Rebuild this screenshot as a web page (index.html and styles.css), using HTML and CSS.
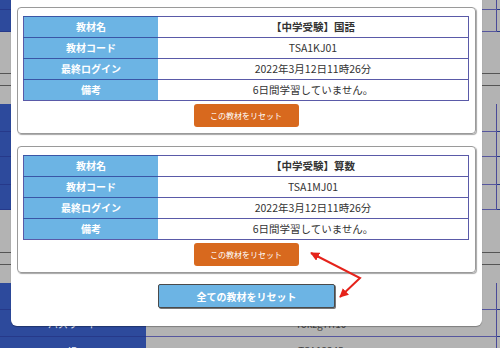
FILE: index.html
```html
<!DOCTYPE html>
<html lang="ja">
<head>
  <meta charset="UTF-8" />
  <title>教材リセット</title>
  <link rel="stylesheet" href="styles.css">
</head>
<body>
  <!-- 背景のページ（モーダルの下） -->
  <div class="page">
    <div class="row blue thin"><div class="head"></div><div class="cell"></div></div>
    <div class="row blue r22"><div class="head"></div><div class="cell"></div></div>
    <div class="band b42 dark-line"></div>
    <div class="band b12 dark-line"></div>
    <div class="band b18"></div>
    <div class="row blue r28"><div class="head"></div><div class="cell"></div></div>
    <div class="row blue r25"><div class="head"></div><div class="cell"></div></div>
    <div class="row blue r28"><div class="head"></div><div class="cell"></div></div>
    <div class="row blue r25"><div class="head"></div><div class="cell"></div></div>
    <div class="band b43 dark-line"></div>
    <div class="band b12 dark-line"></div>
    <div class="band b18"></div>
    <div class="row blue r27"><div class="head"></div><div class="cell"></div></div>
    <div class="row blue r27"><div class="head">パスワード</div><div class="cell">Tokzg7rf10</div></div>
    <div class="row blue r27"><div class="head">ID</div><div class="cell">TSA12345</div></div>
  </div>

  <div class="modal">
    <div class="card">
      <table class="info">
        <tr><th>教材名</th><td class="bold">【中学受験】国語</td></tr>
        <tr><th>教材コード</th><td>TSA1KJ01</td></tr>
        <tr><th>最終ログイン</th><td>2022年3月12日11時26分</td></tr>
        <tr><th>備考</th><td>6日間学習していません。</td></tr>
      </table>
      <button class="reset-one">この教材をリセット</button>
    </div>

    <div class="card">
      <table class="info">
        <tr><th>教材名</th><td class="bold">【中学受験】算数</td></tr>
        <tr><th>教材コード</th><td>TSA1MJ01</td></tr>
        <tr><th>最終ログイン</th><td>2022年3月12日11時26分</td></tr>
        <tr><th>備考</th><td>6日間学習していません。</td></tr>
      </table>
      <button class="reset-one">この教材をリセット</button>
    </div>

    <button class="reset-all">全ての教材をリセット</button>
  </div>

  <!-- 赤い矢印 -->
  <svg class="arrows" width="500" height="348" viewBox="0 0 500 348">
    <defs>
      <marker id="head" viewBox="0 0 10 10" refX="9" refY="5" markerWidth="4.5" markerHeight="4.5" orient="auto-start-reverse">
        <path d="M0 0 L10 5 L0 10 Z" fill="#e5231b" />
      </marker>
    </defs>
    <polyline points="311,253 360,278 340,297" fill="none" stroke="#e5231b" stroke-width="2"
      marker-start="url(#head)" marker-end="url(#head)" />
  </svg>
</body>
</html>
```

FILE: styles.css
```css
body {
  margin: 0;
  width: 500px;
  height: 348px;
  overflow: hidden;
  position: relative;
  font-family: "Noto Sans CJK JP", "Noto Sans", sans-serif;
  background: #b3b3b3;
}

/* 背景 */
.page {
  display: flex;
  flex-direction: column;
}

.row {
  display: flex;
  box-sizing: border-box;
  border-bottom: 1px solid #26398a;
}

.row .head {
  width: 146px;
  background: #2d4a9c;
  color: #e8ecf6;
  font-size: 10px;
  display: flex;
  align-items: center;
  justify-content: center;
}

.row .cell {
  flex: 1;
  background: #b3b3b3;
  color: #444;
  font-size: 10px;
  display: flex;
  align-items: center;
  justify-content: center;
  border-right: 1px solid #4a4a98;
  margin-right: 3px;
  box-shadow: 0 1px 0 #56569e;
}

.thin { height: 10px; }
.r22 { height: 22px; }
.r25 { height: 25px; }
.r27 { height: 27px; }
.r28 { height: 28px; }

.band {
  box-sizing: border-box;
  background: #b3b3b3;
}

.dark-line { border-bottom: 1px solid #555; }
.b12 { height: 12px; }
.b18 { height: 18px; }
.b42 { height: 42px; }
.b43 { height: 43px; }

/* モーダル */
.modal {
  position: absolute;
  left: 11px;
  top: -10px;
  width: 471px;
  box-sizing: border-box;
  padding: 17px 6px 18px;
  background: #fff;
  border-radius: 0 0 6px 6px;
  box-shadow: 0 1px 1px rgba(0, 0, 0, 0.3);
  display: flex;
  flex-direction: column;
  align-items: center;
}

.card {
  width: 459px;
  box-sizing: border-box;
  padding: 8px 6px 6px 5px;
  border: 1px solid #9a9a9a;
  border-radius: 4px;
  box-shadow: 1px 1px 1px rgba(0, 0, 0, 0.35);
  margin-bottom: 12px;
  display: flex;
  flex-direction: column;
  align-items: center;
}

.card + .card {
  margin-bottom: 11px;
}

.info {
  width: 446px;
  border-collapse: collapse;
  border: 1px solid #5a5aa8;
  font-size: 10.5px;
}

.info th,
.info td {
  height: 20px;
  padding: 0;
  text-align: center;
  border-top: 1px solid #5a5aa8;
  line-height: 18px;
}

.info th {
  width: 134px;
  background: #6cb4e4;
  color: #fff;
  font-size: 10px;
  font-weight: bold;
  border-top-color: #3a56a6;
}

.info td {
  color: #333;
}

.info td.bold {
  font-weight: bold;
}

.reset-one {
  margin-top: 3px;
  width: 105px;
  height: 23px;
  border: none;
  border-radius: 3px;
  background: #d8691e;
  color: #fff;
  font-family: inherit;
  font-size: 8px;
  padding: 0;
}

.reset-all {
  width: 177px;
  height: 24px;
  box-sizing: border-box;
  border: 1px solid #4a4a4a;
  border-radius: 2px;
  box-shadow: 1px 1px 0 #777;
  background: #6cb4e4;
  color: #fff;
  font-family: inherit;
  font-size: 10px;
  font-weight: bold;
  padding: 0;
}

.arrows {
  position: absolute;
  left: 0;
  top: 0;
}
```
